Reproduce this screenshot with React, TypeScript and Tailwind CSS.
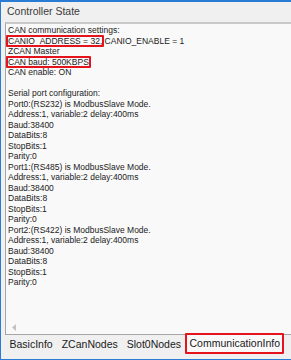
import React from "react";

const lines: { text: string; mark?: "addr" | "baud" }[] = [
  { text: "CAN communication settings:" },
  { text: "CANIO_ADDRESS = 32, CANIO_ENABLE = 1", mark: "addr" },
  { text: "ZCAN Master" },
  { text: "CAN baud: 500KBPS", mark: "baud" },
  { text: "CAN enable: ON" },
  { text: "" },
  { text: "Serial port configuration:" },
  { text: "Port0:(RS232) is ModbusSlave Mode." },
  { text: "Address:1, variable:2 delay:400ms" },
  { text: "Baud:38400" },
  { text: "DataBits:8" },
  { text: "StopBits:1" },
  { text: "Parity:0" },
  { text: "Port1:(RS485) is ModbusSlave Mode." },
  { text: "Address:1, variable:2 delay:400ms" },
  { text: "Baud:38400" },
  { text: "DataBits:8" },
  { text: "StopBits:1" },
  { text: "Parity:0" },
  { text: "Port2:(RS422) is ModbusSlave Mode." },
  { text: "Address:1, variable:2 delay:400ms" },
  { text: "Baud:38400" },
  { text: "DataBits:8" },
  { text: "StopBits:1" },
  { text: "Parity:0" },
];

function Marked({ children }: { children: React.ReactNode }) {
  return (
    <span className="relative">
      {children}
      <span className="absolute -left-[2px] -right-[2px] -top-[1px] -bottom-[1px] border-2 border-[#e5141c] rounded-[1px] pointer-events-none" />
    </span>
  );
}

function Line({ text, mark }: { text: string; mark?: "addr" | "baud" }) {
  if (!text) return <div className="h-[10.5px]" />;
  if (mark === "addr") {
    return (
      <div className="h-[10.5px] whitespace-nowrap">
        <Marked>CANIO_ADDRESS = 32,</Marked> CANIO_ENABLE = 1
      </div>
    );
  }
  if (mark === "baud") {
    return (
      <div className="h-[10.5px] whitespace-nowrap">
        <Marked>{text}</Marked>
      </div>
    );
  }
  return <div className="h-[10.5px] whitespace-nowrap">{text}</div>;
}

const tabs = ["BasicInfo", "ZCanNodes", "Slot0Nodes", "CommunicationInfo"];

export default function App() {
  return (
    <div className="w-[291px] h-[360px] overflow-hidden flex flex-col bg-[#f0f0f0] border-t-2 border-l border-b border-[#2a7bd4] font-['Liberation_Sans',Arial,sans-serif]">
      <div className="h-[20px] shrink-0 flex items-center pl-[6px] text-[10.5px] text-[#3a3a3a]">
        Controller State
      </div>

      <div className="ml-[4px] h-[313px] shrink-0 flex flex-col border-t-2 border-l border-b border-t-[#c9c9c9] border-l-[#a6a6a6] border-b-[#a6a6a6] bg-[#f9f9f9]">
        <div className="flex-1 pt-[1px] pl-[2px] text-[8.5px] leading-[10.5px] text-[#222]">
          {lines.map((l, i) => (
            <Line key={i} text={l.text} mark={l.mark} />
          ))}
        </div>
        <div className="h-[14px] shrink-0 flex items-center pl-[6px]">
          <svg width="4" height="7" viewBox="0 0 4 7">
            <path d="M4 0 L0 3.5 L4 7 Z" fill="#c2c2c2" />
          </svg>
        </div>
      </div>

      <div className="flex-1 flex items-start pl-[4px] gap-[-1px] text-[10.5px] text-[#1a1a1a]">
        {tabs.map((t, i) => {
          const active = i === tabs.length - 1;
          return (
            <div
              key={t}
              className={
                active
                  ? "relative h-[21px] -mt-[2px] px-[4px] flex items-center bg-[#f9f9f9]"
                  : "h-[19px] px-[4.5px] flex items-center"
              }
            >
              {t}
              {active && (
                <span className="absolute -left-[1px] right-[0px] top-0 bottom-0 border-2 border-[#e5141c] rounded-[1px]" />
              )}
            </div>
          );
        })}
      </div>
    </div>
  );
}
